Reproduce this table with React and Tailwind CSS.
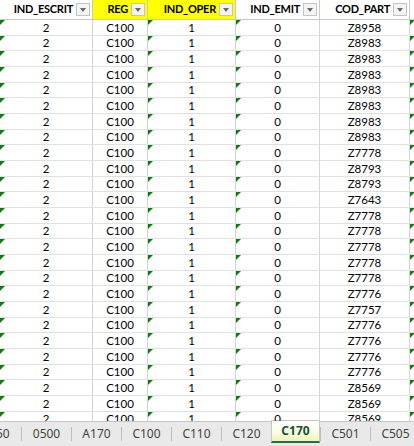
const cols = [
  { name: 'IND_ESCRIT', w: 'w-[93px]', hl: false },
  { name: 'REG', w: 'w-[55px]', hl: true },
  { name: 'IND_OPER', w: 'w-[88px]', hl: true },
  { name: 'IND_EMIT', w: 'w-[84px]', hl: false },
  { name: 'COD_PART', w: 'w-[90px]', hl: false },
];

const codes = [
  'Z8958', 'Z8983', 'Z8983', 'Z8983', 'Z8983', 'Z8983', 'Z8983', 'Z8983',
  'Z7778', 'Z8793', 'Z8793', 'Z7643', 'Z7778', 'Z7778', 'Z7778', 'Z7778',
  'Z7778', 'Z7776', 'Z7757', 'Z7776', 'Z7776', 'Z7776', 'Z7776', 'Z8569',
  'Z8569', 'Z8569',
];

const tabs = ['0500', 'A170', 'C100', 'C110', 'C120', 'C170', 'C501', 'C505'];

function Flag() {
  return (
    <span className="absolute left-0 top-0 w-0 h-0 border-t-[5px] border-t-[#107c10] border-r-[5px] border-r-transparent" />
  );
}

function FilterButton() {
  return (
    <span className="flex items-center justify-center w-[14px] h-[13px] border border-[#c4c4c4] bg-[#f4f4f4] mr-[2px] ml-[3px] shrink-0">
      <span className="w-0 h-0 border-l-[3.5px] border-l-transparent border-r-[3.5px] border-r-transparent border-t-[4px] border-t-[#6a6a6a]" />
    </span>
  );
}

function Cell({ w, flag, children }) {
  return (
    <div className={`${w} relative shrink-0 flex items-center justify-center border-r border-[#d4d4d4]`}>
      {flag && <Flag />}
      {children}
    </div>
  );
}

export default function App() {
  return (
    <div className="w-[414px] h-[446px] overflow-hidden bg-white flex flex-col" style={{ fontFamily: 'Lato, "Liberation Sans", sans-serif' }}>
      <div className="h-[421px] overflow-hidden shrink-0">
        {/* header */}
        <div className="flex h-[20px] border-b border-[#c8c8c8] text-[11px] tracking-[-0.25px] font-bold text-black">
          {cols.map((c) => (
            <div
              key={c.name}
              className={`${c.w} shrink-0 flex items-center justify-end border-r border-[#c8c8c8] ${c.hl ? 'bg-[#ffff00]' : 'bg-white'}`}
            >
              <span>{c.name}</span>
              <FilterButton />
            </div>
          ))}
          <div className="flex-1 bg-white" />
        </div>

        {/* rows */}
        {codes.map((code, i) => (
          <div key={i} className="flex h-[15.68px] border-b border-[#e1e1e1] text-[11.5px] text-black leading-none">
            <Cell w="w-[93px]" flag>2</Cell>
            <Cell w="w-[55px]">C100</Cell>
            <Cell w="w-[88px]" flag>1</Cell>
            <Cell w="w-[84px]" flag>0</Cell>
            <Cell w="w-[90px]">{code}</Cell>
            <div className="flex-1 relative">
              <Flag />
            </div>
          </div>
        ))}
      </div>

      {/* sheet tabs */}
      <div className="flex-1 flex bg-[#e9e9e9] border-t border-[#c6c6c6] text-[12px] text-[#444]" style={{ fontFamily: '"Noto Sans", "Liberation Sans", sans-serif' }}>
        <div className="w-[50px] -ml-[29px] shrink-0 flex items-center justify-center">0450</div>
        {tabs.map((t) => {
          const active = t === 'C170';
          if (active) {
            return (
              <div
                key={t}
                className="w-[49px] shrink-0 -mt-[2px] mb-[3px] flex items-center justify-center border-x border-t border-[#c6c6c6] border-b-2 border-b-[#1e7145] bg-gradient-to-b from-white via-[#fbfde8] to-[#eef5b4] font-bold text-[#17522f]"
              >
                {t}
              </div>
            );
          }
          return (
            <div key={t} className="flex items-center shrink-0">
              <span className="w-px h-[14px] bg-[#bdbdbd]" />
              <div className="w-[49px] flex items-center justify-center">{t}</div>
            </div>
          );
        })}
        <span className="w-px h-[14px] bg-[#bdbdbd] self-center" />
      </div>
    </div>
  );
}
